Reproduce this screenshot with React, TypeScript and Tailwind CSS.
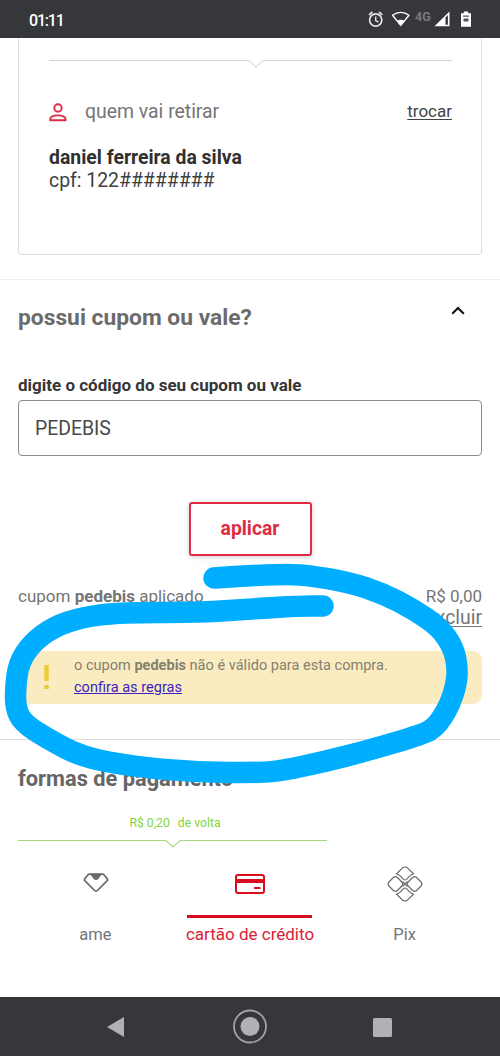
const gray = "#6b6b6b";

// centre line of the hand-drawn marker
const marker: [number, number][] = [
  [214, 578], [250, 575.5], [280, 574.5], [306, 574.8], [350, 582.5], [383, 593.5], [413, 609],
  [440, 627.5], [453.5, 648], [457.5, 667], [456.5, 684], [450, 704], [442, 718], [435, 727], [424, 734],
  [368, 750.5], [325, 761.5], [283, 770.5], [260, 772.7], [197, 772.2], [133, 766.5],
  [82, 757], [48, 739], [23, 723], [15.5, 708], [15.5, 685], [19, 663], [31, 644],
  [53, 627], [83, 617], [122, 612.3], [200, 612.5], [250, 609], [300, 606], [323, 606],
];

function smooth(points: [number, number][]) {
  let d = `M${points[0][0]} ${points[0][1]}`;
  for (let i = 1; i < points.length - 1; i++) {
    const [x, y] = points[i];
    const [nx, ny] = points[i + 1];
    d += ` Q${x} ${y} ${(x + nx) / 2} ${(y + ny) / 2}`;
  }
  const last = points[points.length - 1];
  return `${d} L${last[0]} ${last[1]}`;
}

function StatusBar() {
  return (
    <header className="flex h-[38px] items-center justify-between bg-[#36373b] pr-7 pl-[29px] text-white">
      <span className="pt-[4px] text-[16px] font-medium tracking-[-1.2px]">01:11</span>
      <svg width="106" height="38" viewBox="366 0 106 38" fill="none">
        <g stroke="#e4e4e4" strokeWidth="1.7">
          <circle cx="375.7" cy="20" r="6.1" />
          <path d="M375.7 16.5v4l2.7 1.7" strokeWidth="1.4" />
          <path d="M369 14.8l3.4-2.8M382.4 14.8L379 12" />
        </g>
        <path d="M392.5 15.2c5-3.8 11.5-3.8 16.5 0l-8.25 10.2z" stroke="#fff" strokeWidth="1.4" strokeLinejoin="round" />
        <path d="M397 20.8c2.4-1.5 5.2-1.5 7.6 0l-3.800 5z" fill="#fff" />
        <text x="415" y="20.5" fill="#77787c" fontSize="12.5" fontWeight="700" fontFamily="Roboto">4G</text>
        <path d="M449.5 11.5v14.7H434.5z" fill="#fff" />
        <path d="M445.5 17.5v7.2h2.4v-9.6z" fill="#36373b" />
        <path d="M463.8 11.5h4.4v1.7h2.8v13.6H461V13.2h2.8z" fill="#fff" />
        <path d="M463 15.5h6v1.2h-6zM463.5 18.5h5v3h-5z" fill="#55565a" />
      </svg>
    </header>
  );
}

function PickupCard() {
  return (
    <section className="mx-[18px] h-[217px] rounded-b-[4px] border border-t-0 border-[#dfdfdf] pt-5 pr-[29px] pl-[30px]">
      <svg className="block" width="403" height="10" viewBox="0 0 403 10" fill="none">
        <path d="M0 2.5h200l7 6.5 7-6.5h189" stroke="#d2d2d2" />
      </svg>
      <div className="mt-[29px] flex h-7 items-center">
        <svg className="mt-0.5" width="18" height="19" viewBox="0 0 18 19" fill="none" stroke="#df2c43" strokeWidth="1.9">
          <circle cx="9" cy="5" r="3.7" />
          <path d="M1.2 17.3v-1C1.2 13.7 5 12.4 9 12.4s7.6 1.3 7.6 3.9v1z" strokeLinejoin="round" />
        </svg>
        <span className="mt-0.5 ml-[18px] flex-1 text-[19.4px] text-[#757575]">quem vai retirar</span>
        <a className="mt-px text-[17px] text-[#444] underline underline-offset-2">trocar</a>
      </div>
      <p className="mt-[21px] text-[19.4px] leading-[23px] font-bold text-[#303030]">daniel ferreira da silva</p>
      <p className="text-[19.4px] leading-[23px] text-[#404040]">cpf: 122########</p>
    </section>
  );
}

function Coupon() {
  return (
    <section className="mt-6 h-[460px] border-t border-[#eeeeee] px-[18px]">
      <div className="flex h-[75px] items-center justify-between pr-[17px]">
        <h2 className="pt-0.5 text-[22.8px] font-bold text-[#6b6b6b]">possui cupom ou vale?</h2>
        <svg className="mb-3.5" width="14" height="9" viewBox="0 0 14 9" fill="none">
          <path d="M1.2 7.7L7 1.9l5.8 5.8" stroke="#111" strokeWidth="2.1" />
        </svg>
      </div>
      <label className="mt-5 block h-[25px] text-[17px] leading-5 font-bold text-[#363636]">
        digite o código do seu cupom ou vale
      </label>
      <div className="flex h-[56px] items-center rounded-[4px] border border-[#8a8a8a] px-4 pt-0.5 text-[19.4px] text-[#484848]">
        PEDEBIS
      </div>
      <button className="mx-auto mt-[46px] flex h-[54px] w-[123px] items-center justify-center rounded-[3px] border-2 border-[#df2c43] text-[19.3px] font-bold text-[#df2c43] shadow-[0_1px_5px_rgba(0,0,0,0.2)]">
        aplicar
      </button>
      <div className="mt-[29px] flex h-[66px] justify-between text-[17px] text-[#757575]">
        <p className="leading-[22px]">cupom <b>pedebis</b> aplicado</p>
        <div className="text-right leading-[22px]">
          <p>R$ 0,00</p>
          <a className="text-[19.4px] underline underline-offset-2">excluir</a>
        </div>
      </div>
      <div className="flex h-[53px] items-center rounded-[9px] bg-[#faecc0] pb-0.5 text-[14.55px] leading-[22px] text-[#85806f]">
        <svg className="mr-[25px] ml-[26px]" width="5" height="24" viewBox="0 0 5 24" fill="#edcb36">
          <path d="M.3 0h4.4v16H.3zM.3 20h4.4v4H.3z" />
        </svg>
        <div>
          <p>o cupom <b>pedebis</b> não é válido para esta compra.</p>
          <a className="text-[#3b1fc0] underline">confira as regras</a>
        </div>
      </div>
    </section>
  );
}

function Payments() {
  return (
    <section className="h-[258px] border-t border-[#dddddd] px-[18px]">
      <h2 className="h-[74px] pt-6 text-[21.8px] leading-[30px] font-bold text-[#666]">formas de pagamento</h2>
      <p className="w-[309px] pl-[5px] text-center text-[12.2px] leading-[18px] text-[#83d43b]">
        R$ 0,20 <span className="ml-[5px]">de volta</span>
      </p>
      <svg className="mt-[7px] block" width="309" height="10" viewBox="0 0 309 10" fill="none">
        <path d="M0 1.5h148l7 6.5 7-6.5h147" stroke="#a4d980" strokeWidth="1.2" />
      </svg>
      <div className="grid grid-cols-3 text-center text-[16.5px] text-[#757575]">
        <div>
          <div className="flex h-[68px] items-center justify-center pl-0.5">
            <svg width="26" height="20" viewBox="0 0 26 20" fill="none" stroke={gray} strokeWidth="1.7" strokeLinejoin="round">
              <path d="M6.5 1.2h13c.7 0 1.2.2 1.7.8l2.9 3.6c.6.8.6 1.6-.1 2.3l-9.600 9.600c-.9.900-1.900.9-2.800 0L2 7.900c-.7-.7-.7-1.500-.1-2.300L4.800 2c.5-.6 1-.8 1.700-.8z" />
              <path d="M8.500 1.500h9l-2.700 3.700c-1.100 1.200-2.500 1.200-3.600 0z" fill={gray} />
            </svg>
          </div>
          <p className="pt-[3px] leading-[30px]">ame</p>
        </div>
        <div className="text-[#dc2038]">
          <div className="mx-auto flex h-[69px] w-[125px] items-center justify-center border-b-[3px] border-[#d90d20] pt-[3px]">
            <svg width="30" height="20" viewBox="0 0 30 20" fill="none" stroke="#d90d20" strokeWidth="2">
              <rect x="1" y="1" width="28" height="18" rx="2" />
              <path d="M1 7h28" strokeWidth="4" />
              <path d="M19 14h6.500" />
            </svg>
          </div>
          <p className="pt-px text-[17px] leading-[30px]">cartão de crédito</p>
        </div>
        <div>
          <div className="flex h-[68px] items-center justify-center pt-px">
            <svg width="36" height="36" viewBox="-18 -18 36 36" fill="none" stroke={gray} strokeWidth="1.200" strokeLinejoin="round">
              <rect x="-6" y="-6" width="12" height="12" rx="3.200" transform="translate(-9.600 0) rotate(45)" />
              <rect x="-6" y="-6" width="12" height="12" rx="3.200" transform="translate(9.600 0) rotate(45)" />
              <path d="M-8.600-10l5.600-5.700q3-2.600 6 0l5.600 5.700q-2 .2-3.200 1.400l-4 4q-1.400 1.200-2.800 0l-4-4q-1.200-1.200-3.200-1.400z" />
              <path d="M-8.600 10l5.600 5.700q3 2.600 6 0l5.600-5.700q-2-.2-3.200-1.400l-4-4q-1.400-1.200-2.800 0l-4 4q-1.200 1.200-3.200 1.400z" />
              <path d="M-2.500-2.500l5 5M2.500-2.500l-5 5" />
            </svg>
          </div>
          <p className="pt-[3px] leading-[30px]">Pix</p>
        </div>
      </div>
    </section>
  );
}

function NavBar() {
  return (
    <nav className="flex h-[59px] items-center bg-[#36373b]">
      <svg width="500" height="59" viewBox="0 0 500 59" fill="#b0b1b5">
        <path d="M107 30l17-10v20z" />
        <circle cx="250" cy="29.500" r="9.500" />
        <circle cx="250" cy="29.500" r="16" fill="none" stroke="#a2a3a7" strokeWidth="1.800" />
        <rect x="373" y="21" width="19" height="19" rx="1.500" />
      </svg>
    </nav>
  );
}

export default function App() {
  return (
    <div className="relative h-[1056px] w-[500px] overflow-hidden bg-white font-['Roboto',sans-serif]">
      <StatusBar />
      <PickupCard />
      <Coupon />
      <Payments />
      <NavBar />
      <svg className="absolute inset-0" width="500" height="1056" viewBox="0 0 500 1056" fill="none">
        <path d={smooth(marker)} stroke="#00aeff" strokeWidth="21.500" strokeLinecap="round" strokeLinejoin="round" />
      </svg>
    </div>
  );
}
